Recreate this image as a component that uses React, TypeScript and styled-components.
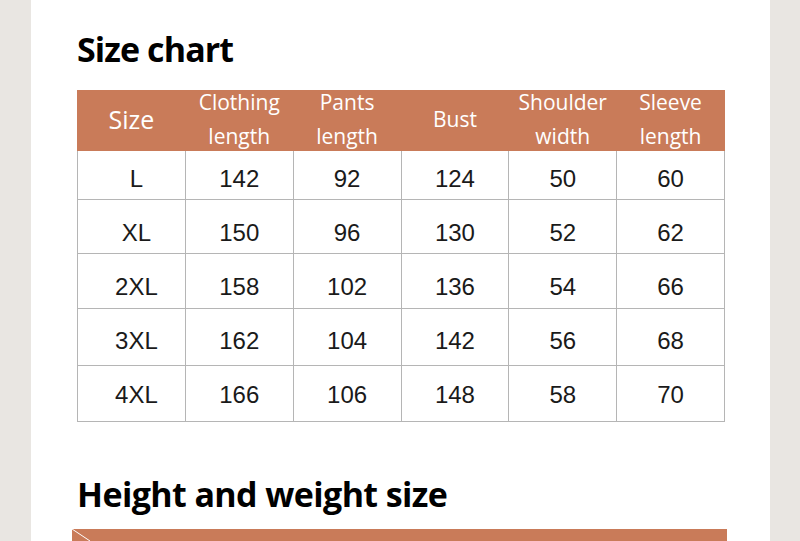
import styled, { createGlobalStyle } from "styled-components";

const GlobalStyle = createGlobalStyle`
  html, body {
    margin: 0;
    padding: 0;
    background: #e9e6e2;
    overflow: hidden;
  }
`;

type Row = { size: string; values: string[]; h: number; pad: number };

const headers = [
  { top: "Clothing", bottom: "length" },
  { top: "Pants", bottom: "length" },
  { top: "Bust", bottom: "" },
  { top: "Shoulder", bottom: "width" },
  { top: "Sleeve", bottom: "length" },
];

const rows: Row[] = [
  { size: "L", values: ["142", "92", "124", "50", "60"], h: 49, pad: 7 },
  { size: "XL", values: ["150", "96", "130", "52", "62"], h: 54, pad: 12 },
  { size: "2XL", values: ["158", "102", "136", "54", "66"], h: 55, pad: 11 },
  { size: "3XL", values: ["162", "104", "142", "56", "68"], h: 57, pad: 7 },
  { size: "4XL", values: ["166", "106", "148", "58", "70"], h: 56, pad: 2 },
];

export default function App() {
  return (
    <>
      <GlobalStyle />
      <Page>
        <Panel>
          <Title>Size chart</Title>
          <Table>
            <HeadCell $big>Size</HeadCell>
            {headers.map((h) => (
              <HeadCell key={h.top}>
                {h.top}
                {h.bottom && <br />}
                {h.bottom}
              </HeadCell>
            ))}
            {rows.map((r, i) =>
              [r.size, ...r.values].map((v, j) => (
                <Cell key={i + "-" + j} $h={r.h} $pad={r.pad} $first={j === 0}>
                  {v}
                </Cell>
              ))
            )}
          </Table>
          <SubTitle>Height and weight size</SubTitle>
          <Bar>
            <svg width="40" height="12" viewBox="0 0 40 12">
              <line x1="0" y1="0" x2="18" y2="12" stroke="#fff" strokeWidth="1" />
            </svg>
          </Bar>
        </Panel>
      </Page>
    </>
  );
}

const Page = styled.div`
  width: 800px;
  height: 541px;
  display: flex;
  background: #e9e6e2;
`;

const Panel = styled.div`
  margin-left: 31px;
  width: 739px;
  height: 541px;
  background: #fff;
  padding: 27px 0 0 46px;
  box-sizing: border-box;
  display: flex;
  flex-direction: column;
`;

const Title = styled.h1`
  margin: 0;
  font-family: "Open Sans", sans-serif;
  font-weight: 700;
  font-size: 34px;
  line-height: 44px;
  color: #000;
  letter-spacing: -0.9px;
`;

const Table = styled.div`
  margin-top: 19px;
  width: 647px;
  display: grid;
  grid-template-columns: repeat(6, 1fr);
  border-left: 1px solid #b5b5b5;
`;

const HeadCell = styled.div<{ $big?: boolean }>`
  height: 61px;
  padding-bottom: 4px;
  box-sizing: border-box;
  background: #c97b59;
  color: #fff;
  font-family: "Open Sans", sans-serif;
  font-size: ${(p) => (p.$big ? "25px" : "21px")};
  line-height: 34px;
  display: flex;
  align-items: center;
  justify-content: center;
  text-align: center;
  margin-left: -1px;
`;

const Cell = styled.div<{ $h: number; $pad: number; $first?: boolean }>`
  height: ${(p) => p.$h}px;
  box-sizing: border-box;
  padding-top: ${(p) => p.$pad}px;
  padding-left: ${(p) => (p.$first ? "10px" : "0")};
  border-right: 1px solid #b5b5b5;
  border-bottom: 1px solid #b5b5b5;
  display: flex;
  align-items: center;
  justify-content: center;
  font-family: "Liberation Sans", Arial, sans-serif;
  font-size: 24px;
  color: #1a1a1a;
`;

const SubTitle = styled.h2`
  margin: 50px 0 0 0;
  font-family: "Open Sans", sans-serif;
  font-weight: 700;
  font-size: 34px;
  line-height: 44px;
  color: #000;
  letter-spacing: -0.6px;
`;

const Bar = styled.div`
  margin: 13px 0 0 -5px;
  width: 655px;
  height: 30px;
  background: #c97b59;
  display: flex;
  align-items: flex-start;
`;
